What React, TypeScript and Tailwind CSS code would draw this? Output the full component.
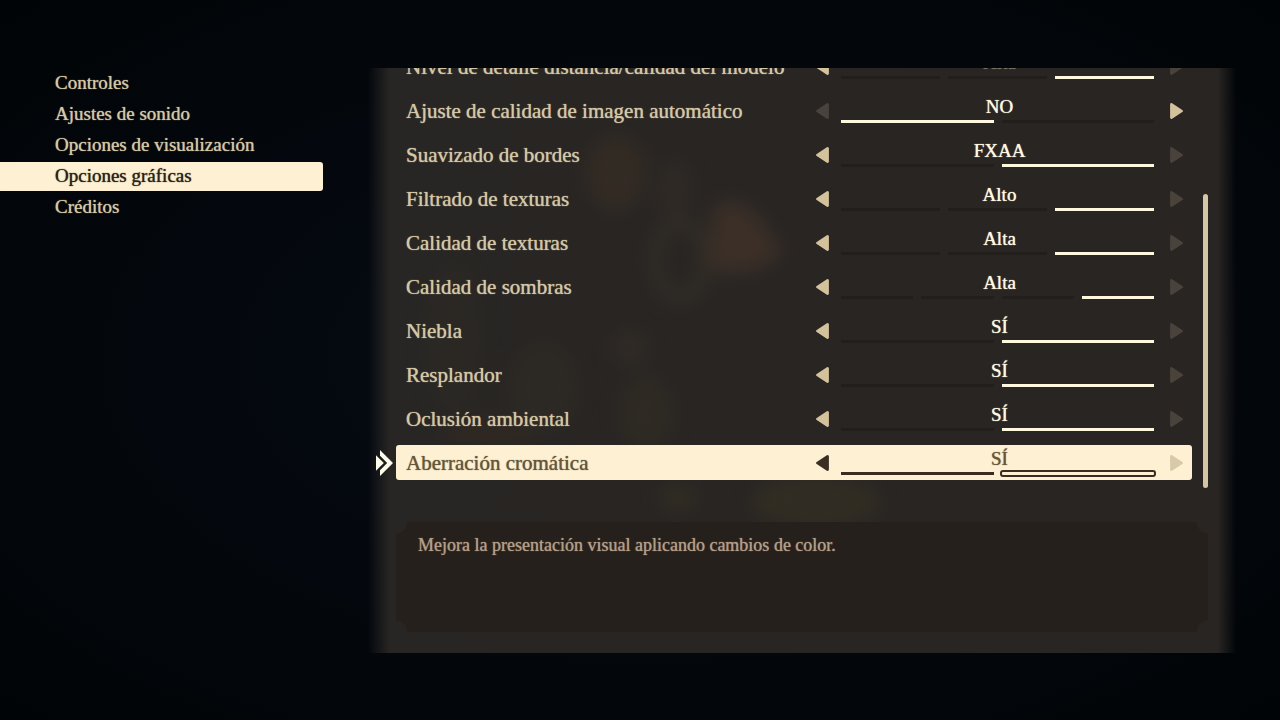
import React, { useState } from 'react';
import clsx from 'clsx';

interface Option {
  label: string;
  values: string[];
  initial: number;
  faded?: boolean;
}

const MENU = ['Controles', 'Ajustes de sonido', 'Opciones de visualización', 'Opciones gráficas', 'Créditos'];

const OPTIONS: Option[] = [
  { label: 'Nivel de detalle distancia/calidad del modelo', values: ['Baja', 'Media', 'Alta'], initial: 2, faded: true },
  { label: 'Ajuste de calidad de imagen automático', values: ['NO', 'SÍ'], initial: 0 },
  { label: 'Suavizado de bordes', values: ['NO', 'FXAA'], initial: 1 },
  { label: 'Filtrado de texturas', values: ['Bajo', 'Medio', 'Alto'], initial: 2 },
  { label: 'Calidad de texturas', values: ['Baja', 'Media', 'Alta'], initial: 2 },
  { label: 'Calidad de sombras', values: ['NO', 'Baja', 'Media', 'Alta'], initial: 3 },
  { label: 'Niebla', values: ['NO', 'SÍ'], initial: 1 },
  { label: 'Resplandor', values: ['NO', 'SÍ'], initial: 1 },
  { label: 'Oclusión ambiental', values: ['NO', 'SÍ'], initial: 1 },
  { label: 'Aberración cromática', values: ['NO', 'SÍ'], initial: 1 },
];

const SELECTED = 'Aberración cromática';

const Arrow: React.FC<{ right?: boolean }> = ({ right }) => (
  <svg viewBox="0 0 13 16" className={clsx('block h-4 w-[13px]', right && 'rotate-180')} aria-hidden="true">
    <path d="M1.4 8 11.6 1.4V14.6Z" fill="currentColor" stroke="currentColor" strokeWidth="2.6" strokeLinejoin="round" />
  </svg>
);

const Cursor: React.FC = () => (
  <svg viewBox="0 0 17 26" className="absolute top-[5px] -left-5 h-[26px] w-[17px]" aria-hidden="true">
    <path d="M0 5.2 7.8 13 0 20.8Z" fill="#fffbe9" />
    <path d="M4 0 17 13 4 26V20.2L11.2 13 4 5.8Z" fill="#fffbe9" />
  </svg>
);

const Backdrop: React.FC = () => (
  <svg viewBox="0 0 868 585" preserveAspectRatio="none" className="absolute inset-0 h-full w-full opacity-60" aria-hidden="true">
    <defs>
      <filter id="soft" x="-50%" y="-50%" width="200%" height="200%" colorInterpolationFilters="sRGB">
        <feGaussianBlur stdDeviation="9" />
      </filter>
    </defs>
    <g filter="url(#soft)">
      <ellipse cx="248" cy="105" rx="30" ry="38" fill="#3a2f24" />
      <ellipse cx="306" cy="120" rx="18" ry="28" fill="#332d26" />
      <path d="M345 140 Q375 120 402 165 L415 185 Q380 215 340 200Z" fill="#49362a" />
      <ellipse cx="312" cy="192" rx="25" ry="38" fill="none" stroke="#3a3328" strokeWidth="12" />
      <ellipse cx="85" cy="270" rx="28" ry="75" fill="#2d2a25" />
      <ellipse cx="175" cy="320" rx="35" ry="45" fill="#302c25" />
      <ellipse cx="262" cy="280" rx="18" ry="18" fill="#352e26" />
      <ellipse cx="278" cy="345" rx="28" ry="38" fill="#322e24" />
      <ellipse cx="120" cy="365" rx="45" ry="16" fill="#342a22" />
      <ellipse cx="310" cy="430" rx="20" ry="14" fill="#353123" />
      <ellipse cx="448" cy="434" rx="65" ry="28" fill="#363223" />
    </g>
  </svg>
);

const OptionRow: React.FC<{ option: Option }> = ({ option }) => {
  const [current, setCurrent] = useState(option.initial);
  const selected = option.label === SELECTED;
  const atStart = current === 0;
  const atEnd = current === option.values.length - 1;
  const on = selected ? 'text-[#3a2f22]' : 'text-[#d3c29c]';
  const off = selected ? 'text-[#d8c9a8]' : 'text-[#49433b]';

  return (
    <li
      className={clsx(
        'relative flex h-[35px] shrink-0 items-center rounded-[3px] pr-[9px] pl-[10px]',
        selected ? 'bg-[#fdf0d3] text-[#66563b]' : 'text-[#d3c7a5]'
      )}
    >
      {selected && <Cursor />}
      <span className="flex-1 truncate text-[21px] leading-8">{option.label}</span>
      <button
        type="button"
        aria-label={`${option.label}: anterior`}
        disabled={atStart}
        onClick={() => setCurrent(current - 1)}
        className={clsx('mr-3', atStart ? off : on)}
      >
        <Arrow />
      </button>
      <div className="flex h-full w-[313px] flex-col">
        <span
          className={clsx(
            'h-[27px] pl-1 text-center text-[19px] leading-7',
            selected ? 'text-[#66563b]' : option.faded ? 'text-[#7a7466]' : 'text-[#fff8e0]'
          )}
        >
          {option.values[current]}
        </span>
        <div className="flex gap-2">
          {option.values.map((value, index) => (
            <span
              key={value}
              className={clsx(
                'h-[3px] flex-1',
                selected && index === current && 'rounded-[1px] outline-2 outline-[#3a2c20]',
                selected && index !== current && 'bg-[#3a2c20]',
                !selected && index === current && 'bg-[#fff8e0]',
                !selected && index !== current && 'bg-[#211e1c]'
              )}
            />
          ))}
        </div>
      </div>
      <button
        type="button"
        aria-label={`${option.label}: siguiente`}
        disabled={atEnd}
        onClick={() => setCurrent(current + 1)}
        className={clsx('ml-4', atEnd ? off : on)}
      >
        <Arrow right />
      </button>
    </li>
  );
};

export default function App() {
  const [active, setActive] = useState(3);

  return (
    <div className="flex h-screen bg-[#03070c] bg-[radial-gradient(ellipse_at_center,#050b14_0%,#04080e_50%,#010406_100%)] pt-17 pb-[67px] font-['Liberation_Serif',serif] [text-shadow:0_0_1px_currentColor]">
      <nav className="w-[323px] shrink-0 pt-px">
        <ul className="flex flex-col gap-[2px]">
          {MENU.map((item, index) => (
            <li key={item}>
              <a
                href="#"
                onClick={() => setActive(index)}
                className={clsx(
                  'block h-[29px] rounded-r-[3px] pl-[55px] text-[19px] leading-7 [text-shadow:0_0_1px_currentColor]',
                  index === active ? 'bg-[#fdf0d3] text-[#2c2419]' : 'text-[#d3c7a5]'
                )}
              >
                {item}
              </a>
            </li>
          ))}
        </ul>
      </nav>

      <main className="relative mr-11 ml-[45px] flex min-w-0 flex-1 flex-col bg-[linear-gradient(to_right,transparent,#282624_22px,#282523_calc(100%-18px),transparent)] pr-7 pb-[21px] pl-2">
        <Backdrop />
        <div className="relative flex min-h-0 flex-1">
          <ul className="flex min-w-0 flex-1 flex-col justify-end gap-[9px] overflow-hidden pb-2 pl-5">
            {OPTIONS.map((option) => (
              <OptionRow key={option.label} option={option} />
            ))}
          </ul>
          <div className="ml-[11px] flex w-[5px] flex-col justify-end">
            <div className="h-[70%] rounded-full bg-[#d3c7a5]"></div>
          </div>
        </div>

        <div className="relative mt-[34px] ml-5 h-[110px] shrink-0 bg-[#25201b] px-[22px] py-[9px] [clip-path:polygon(0_12px,6px_10px,10px_6px,11px_0,calc(100%-11px)_0,calc(100%-10px)_6px,calc(100%-6px)_10px,100%_12px,100%_calc(100%-12px),calc(100%-6px)_calc(100%-10px),calc(100%-10px)_calc(100%-6px),calc(100%-11px)_100%,11px_100%,10px_calc(100%-6px),6px_calc(100%-10px),0_calc(100%-12px))]">
          <p className="text-lg leading-7 text-[#b39d86]">Mejora la presentación visual aplicando cambios de color.</p>
        </div>
      </main>
    </div>
  );
}
